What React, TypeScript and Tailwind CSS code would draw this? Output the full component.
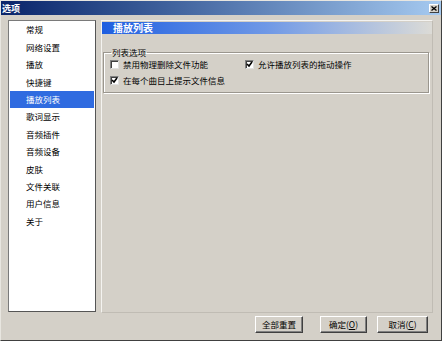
import React from "react";

const font = { fontFamily: '"Noto Sans CJK SC", "Noto Sans", sans-serif' };

function Check({ checked }: { checked: boolean }) {
  return (
    <div className="w-[9px] h-[9px] bg-white border border-t-[#808080] border-l-[#808080] border-r-[#e0e0e0] border-b-[#e0e0e0] shadow-[inset_1px_1px_0_#404040] flex items-center justify-center shrink-0">
      {checked && (
        <svg width="7" height="7" viewBox="0 0 7 7">
          <path d="M1 3 L3 5 L6 1" stroke="#000" strokeWidth="1.6" fill="none" />
        </svg>
      )}
    </div>
  );
}

function Btn({ children, className }: { children: React.ReactNode; className: string }) {
  return (
    <div
      className={`h-[17px] flex items-center justify-center text-[8.5px] text-black bg-[#d4d0c8] border border-t-white border-l-white border-r-[#404040] border-b-[#404040] shadow-[inset_-1px_-1px_0_#808080] ${className}`}
    >
      {children}
    </div>
  );
}

export default function App() {
  const items = [
    "常规",
    "网络设置",
    "播放",
    "快捷键",
    "播放列表",
    "歌词显示",
    "音频插件",
    "音频设备",
    "皮肤",
    "文件关联",
    "用户信息",
    "关于",
  ];
  return (
    <div
      className="w-[442px] h-[341px] bg-[#d4d0c8] flex flex-col border border-t-[#e8e6e0] border-l-[#e8e6e0] border-r-[#404040] border-b-[#404040] overflow-hidden"
      style={font}
    >
      <div className="h-[14px] bg-gradient-to-r from-[#0a246a] to-[#a6caf0] flex items-center justify-between pl-[1px] pr-[2px]">
        <span className="text-white font-bold text-[9px] leading-none">选项</span>
        <div className="w-[10px] h-[9px] bg-[#d4d0c8] border border-t-white border-l-white border-r-[#404040] border-b-[#404040] flex items-center justify-center">
          <svg width="6" height="5" viewBox="0 0 6 5">
            <path d="M0.5 0.5 L5.5 4.5 M5.5 0.5 L0.5 4.5" stroke="#000" strokeWidth="1.3" />
          </svg>
        </div>
      </div>
      <div className="flex flex-row pl-[7px] pt-[5px] gap-[5px]">
        <div className="w-[88px] h-[292px] bg-white border border-[#7a7a7a] border-r-[#555] border-b-[#555] px-[1px]">
          {items.map((it, i) => (
            <div
              key={i}
              className={`h-[17.4px] flex items-center pl-[16px] text-[8.5px] leading-none ${
                it === "播放列表" ? "bg-[#2f6be0] text-white" : "text-black"
              }`}
            >
              {it}
            </div>
          ))}
        </div>
        <div className="w-[332px] h-[293px] border border-t-[#f4f3f0] border-l-[#f4f3f0] border-r-[#c0bcb4] border-b-[#c0bcb4] pt-[1px]">
          <div className="h-[12px] bg-gradient-to-r from-[#1e5ee0] via-[#6f98e6] to-[#dcdbd6] flex items-center pl-[11px]">
            <span className="text-white font-bold text-[10px] leading-none">播放列表</span>
          </div>
          <fieldset className="mx-[1px] mr-[3px] mt-[14px] border border-[#9a968e] shadow-[inset_1px_1px_0_#fff,1px_1px_0_#fff] h-[45px] px-[6px]">
            <legend className="text-[8.5px] leading-none px-[1px] ml-[1px] text-black">列表选项</legend>
            <div className="flex flex-row mt-[3px]">
              <div className="w-[135px] flex flex-col gap-[7px]">
                <div className="flex items-center gap-[4px] text-[8.5px] leading-none">
                  <Check checked={false} />
                  <span>禁用物理删除文件功能</span>
                </div>
                <div className="flex items-center gap-[4px] text-[8.5px] leading-none">
                  <Check checked={true} />
                  <span>在每个曲目上提示文件信息</span>
                </div>
              </div>
              <div className="flex items-center gap-[4px] text-[8.5px] leading-none self-start">
                <Check checked={true} />
                <span>允许播放列表的拖动操作</span>
              </div>
            </div>
          </fieldset>
        </div>
      </div>
      <div className="flex flex-row justify-end pr-[13px] mt-[3px]">
        <Btn className="w-[48px]">全部重置</Btn>
        <Btn className="w-[47px] ml-[17px]">确定(<span className="underline">O</span>)</Btn>
        <Btn className="w-[51px] ml-[10px]">取消(<span className="underline">C</span>)</Btn>
      </div>
    </div>
  );
}
